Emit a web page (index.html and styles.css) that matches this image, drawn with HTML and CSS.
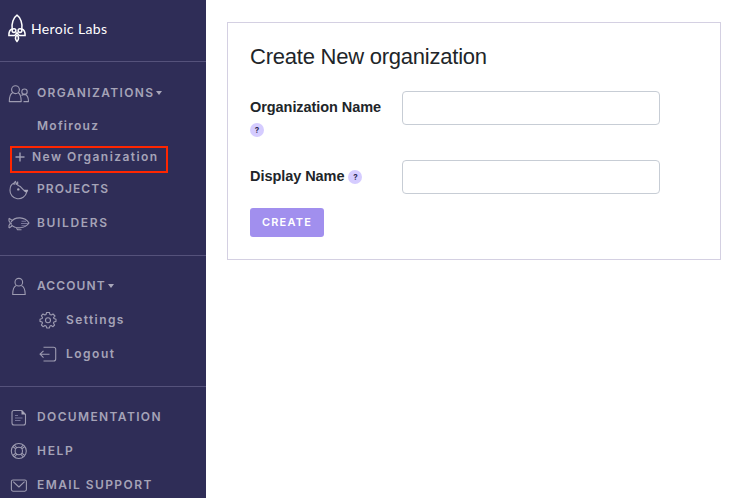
FILE: index.html
```html
<!DOCTYPE html>
<html lang="en">
<head>
<meta charset="utf-8">
<title>Create New organization</title>
<link rel="stylesheet" href="styles.css">
</head>
<body>
<div class="app">
  <aside class="sidebar">
    <header class="brand">
      <svg class="brand-mark" width="18" height="29" viewBox="0 0 18 29" fill="none" stroke="#fff" stroke-width="1.5">
        <path d="M4.2 15.500C3.200 9.500 5.500 3.500 9 1.200C12.500 3.500 14.800 9.500 13.800 15.500"/>
        <path d="M4 15C1.500 16 .8 18 .9 21.500H6.500C7.500 21.500 8 19.500 9 18.500C10 19.500 10.500 21.500 11.500 21.500H17.100C17.200 18 16.500 16 14 15"/>
        <circle cx="6" cy="16.600" r="1.900"/><circle cx="12" cy="16.600" r="1.900"/>
        <path d="M9 21C7 23 7.200 25.500 9 27.500C10.800 25.500 11 23 9 21Z"/>
      </svg>
      <span class="brand-name">Heroic Labs</span>
    </header>
    <nav class="group">
      <a class="row"><span class="icon"><svg width="22" height="18" viewBox="0 0 22 18"><circle cx="7.500" cy="4.700" r="3.900"/><path d="M4.800 7.600C2 9 1.300 11 1.300 16.600H13.200C13.200 11 12.500 9 10.100 7.600"/><circle cx="16.500" cy="6.700" r="2.700"/><path d="M13.500 10.500C14.500 9.700 15.500 9.400 16.500 9.400C19.500 9.800 20.500 12 20.500 16.600H15.500"/></svg></span><span class="label organizations">ORGANIZATIONS</span><i class="caret"></i></a>
      <a class="row org"><span class="label mofirouz">Mofirouz</span></a>
      <a class="row create"><svg class="plus" width="10" height="10" viewBox="0 0 10 10"><path d="M5 .5V9.500M.5 5H9.500"/></svg><span class="label new-org">New Organization</span></a>
      <a class="row"><span class="icon"><svg width="22" height="20" viewBox="0 0 22 20"><path d="M6 3C3.500 4 2 6.800 2 10.200A8.400 8.200 0 0 0 18.600 12.300L19.600 10.300H16C14.500 9.800 14 6.500 9.700 5.300V1.900L8.300 4.500L7.500 1.300L6.500 2.300L6 5"/><circle class="dot" cx="10.300" cy="9.400" r="1.200"/><path class="dot" d="M15.500 10H20L18.600 12.800L16.500 11.800Z"/></svg></span><span class="label projects">PROJECTS</span></a>
      <a class="row"><span class="icon"><svg width="22" height="16" viewBox="0 0 22 16"><path d="M3 6C7 .2 17 .5 21 7C17 13 7 13.300 3 8.500M1 2.200L4.600 4.600M1 12L4.400 9.800M1 2.200V5L2.600 7.200L1 9.400V12M1.500 7.200H4"/><path class="faint" d="M13.500 5.200H18M13 7.500H20M13.500 9.700H18"/><path d="M8.500 12L9.500 13.700H13.500"/></svg></span><span class="label builders">BUILDERS</span></a>
    </nav>
    <nav class="group account-group">
      <a class="row"><span class="icon"><svg width="22" height="20" viewBox="0 0 22 20"><circle cx="10.800" cy="5.200" r="3.800"/><path d="M8.300 8.400C5.800 9.400 4.700 12 4.700 17.500H17.200C17.200 12 15.800 9.400 13.300 8.400"/></svg></span><span class="label account">ACCOUNT</span><i class="caret"></i></a>
      <a class="row sub"><span class="icon"><svg width="18" height="18" viewBox="0 0 18 18"><path d="M7.600 1.500H10.400L10.900 3.400L12.300 4L14 3L16 5L14.500 6.600L14.900 7.500L17 8.200V10.400L14.900 11L14.400 12L15.600 14L14 15.700L12.100 14.500L11 15L10.300 17H7.800L7.100 15L6 14.500L4 15.700L2.400 14L3.500 12L3.100 11L1 10.400V8.200L3.100 7.500L3.500 6.500L2.400 4.700L4 3L5.900 4L7 3.500Z"/><circle cx="9" cy="9.200" r="2.500"/></svg></span><span class="label settings">Settings</span></a>
      <a class="row sub"><span class="icon"><svg width="18" height="18" viewBox="0 0 18 18"><path d="M4.500 2.300H14.500Q16.700 2.300 16.700 4.300V14Q16.700 16 14.500 16H4.500M10.500 9.200H1M4.500 5.800L1 9.200L4.500 12.600"/></svg></span><span class="label logout">Logout</span></a>
    </nav>
    <nav class="group links">
      <a class="row"><span class="icon"><svg width="22" height="18" viewBox="0 0 22 18"><path d="M6 2.500H13.700L17.500 6.300V15Q17.500 17 15.500 17H6Q4 17 4 15V4.500Q4 2.500 6 2.500Z"/><path class="dot" d="M13.500 2.500V6.500H17.500Z"/><path class="faint" d="M7 7.500H10M7 10H14.500M7 12.500H12.500"/></svg></span><span class="label documentation">DOCUMENTATION</span></a>
      <a class="row"><span class="icon"><svg width="22" height="18" viewBox="0 0 22 18"><circle cx="10.800" cy="9" r="7.500"/><circle cx="10.800" cy="9" r="3.700"/><path d="M4.800 4.500L7.800 6.900M6.300 3L8.900 5.800M16.800 4.500L13.800 6.900M15.300 3L12.700 5.800M4.800 13.500L7.800 11.100M6.300 15L8.900 12.200M16.800 13.500L13.800 11.100M15.300 15L12.700 12.200"/></svg></span><span class="label help">HELP</span></a>
      <a class="row"><span class="icon"><svg width="22" height="18" viewBox="0 0 22 18"><rect x="3.400" y="4" width="15" height="11.200" rx="1.600"/><path d="M5.200 5.700L10.900 11L16.600 5.700"/></svg></span><span class="label email">EMAIL SUPPORT</span></a>
    </nav>
  </aside>
  <main class="content">
    <form class="card">
      <h1 class="title">Create New organization</h1>
      <div class="field">
        <label class="field-label" for="org-name">Organization Name <span class="hint">?</span></label>
        <input class="input" id="org-name" type="text">
      </div>
      <div class="field">
        <label class="field-label" for="display-name">Display Name <span class="hint">?</span></label>
        <input class="input" id="display-name" type="text">
      </div>
      <button class="button" type="button">CREATE</button>
    </form>
  </main>
</div>
</body>
</html>
```

FILE: styles.css
```css
*, *::after { box-sizing: border-box; }
body { margin: 0; background: #fff; font-family: "Liberation Sans", Arial, sans-serif; color: #212529; }
.app { display: flex; height: 498px; overflow: hidden; }

.sidebar { flex: 0 0 206px; background: #2f2d57; color: #a5a3b7; font-family: Inter, sans-serif; overflow: hidden; }
.brand { display: flex; align-items: center; gap: 5px; height: 61px; padding: 0 0 5px 8px; }
.brand-name { color: #fff; font: 400 14px/20px Lato, sans-serif; letter-spacing: .38px; white-space: nowrap; padding-top: 1px; }

.group { border-top: 1px solid #55527b; padding: 14px 0 15px; }
.account-group { padding-top: 13px; }
.links { padding: 13px 0 0; }
.row { display: flex; align-items: center; height: 34px; padding-left: 8px; }
.label { font-size: 12px; font-weight: 600; line-height: 16px; white-space: nowrap; }
.icon { flex: none; display: flex; width: 29px; padding-top: 1px; }
.links .icon, .sub .icon { padding-top: 0; }
svg { display: block; flex: none; overflow: visible; }
.row svg { fill: none; stroke: #9d9bb1; stroke-width: 1.1; stroke-linejoin: round; }
.row .dot { fill: #a9a7ba; stroke: none; }
.row .faint { stroke: #77749a; }
.org { height: 33px; padding: 0 0 2px 37px; }
.create { position: relative; height: 29px; padding: 0 0 1px 15px; gap: 7px; }
.create::after { content: ""; position: absolute; left: 10px; top: 3px; width: 158px; height: 27px; border: 2px solid #ff2600; }
.row .plus { stroke-width: 1.4; }
.sub { padding-left: 39px; }
.sub .icon { width: 27px; }
.caret { border: 3.5px solid transparent; border-top: 4px solid #a9a7ba; border-bottom: 0; margin: 0 0 1px 2px; }

.organizations { letter-spacing: 1.36px; }
.mofirouz { letter-spacing: 1.25px; }
.new-org { letter-spacing: 1.45px; }
.projects { letter-spacing: 1.05px; }
.builders { letter-spacing: 1.65px; }
.account { letter-spacing: 1.1px; }
.settings { letter-spacing: 1.4px; }
.logout { letter-spacing: 1.5px; }
.documentation { letter-spacing: 1.37px; }
.help { letter-spacing: 1.7px; }
.email { letter-spacing: 1.42px; }

.content { flex: 1; padding: 22px 13px 0 21px; }
.card { height: 238px; border: 1px solid #d4d0e2; padding: 20px 22px 0; }
.title { margin: 0 0 21px; font-size: 22px; font-weight: 400; line-height: 27px; letter-spacing: -.23px; white-space: nowrap; }
.field { display: flex; height: 69px; }
.field-label { flex: 0 0 152px; padding: 5px 15px 0 0; font-size: 14.500px; font-weight: 700; line-height: 22px; letter-spacing: -.06px; }
.hint { display: inline-block; width: 14px; height: 14px; border-radius: 50%; background: #d5ccff; color: #2f2d57; font: 700 8px/14px Inter, sans-serif; text-align: center; vertical-align: 1px; }
.input { width: 258px; height: 34px; border: 1px solid #c7cdd5; border-radius: 4px; background: #fff; padding: 6px 12px; }
.button { display: block; width: 74px; height: 29px; margin-top: -21px; border: 0; border-radius: 3px; padding: 0; background: #a18fee; color: #fff; font: 600 11px/29px Inter, sans-serif; letter-spacing: 1.2px; }
```
